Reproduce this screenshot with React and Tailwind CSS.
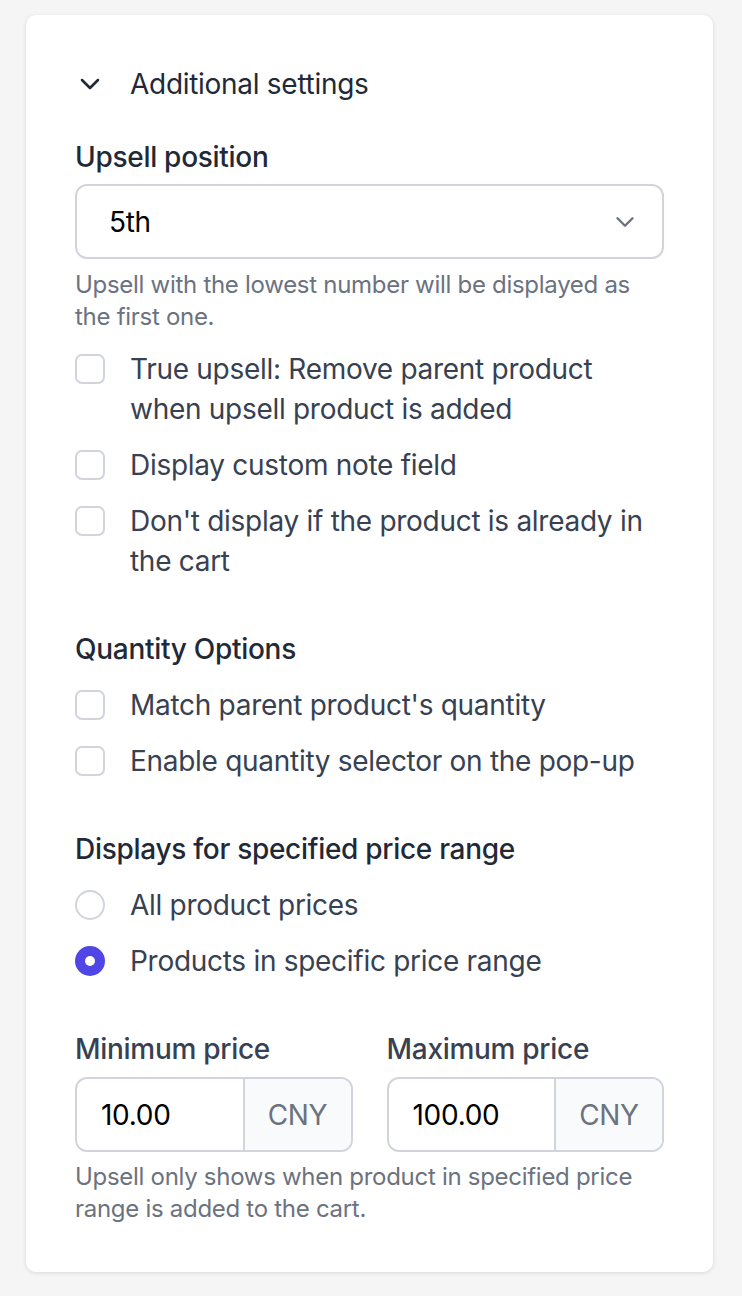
import React from 'react';

function Chevron({ className }) {
  return (
    <svg viewBox="0 0 20 20" fill="none" stroke="currentColor" strokeWidth="1.6" strokeLinecap="round" strokeLinejoin="round" className={className}>
      <path d="M5 7.5l5 5 5-5" />
    </svg>
  );
}

function Checkbox({ children }) {
  return (
    <label className="flex items-start">
      <span className="mt-[5px] w-[30px] h-[30px] shrink-0 rounded-[7px] border-2 border-[#d1d5db] bg-white" />
      <span className="ml-[25px] text-[28px] leading-[40px] text-[#374151]">{children}</span>
    </label>
  );
}

function Radio({ checked, children }) {
  return (
    <label className="flex items-start">
      {checked ? (
        <span className="mt-[5px] w-[30px] h-[30px] shrink-0 rounded-full bg-[#4f46e5] flex items-center justify-center">
          <span className="w-[10px] h-[10px] rounded-full bg-white" />
        </span>
      ) : (
        <span className="mt-[5px] w-[30px] h-[30px] shrink-0 rounded-full border-2 border-[#d1d5db] bg-white" />
      )}
      <span className="ml-[25px] text-[28px] leading-[40px] text-[#374151]">{children}</span>
    </label>
  );
}

function PriceInput({ label, value }) {
  return (
    <div>
      <div className="text-[28px] leading-[40px] font-medium text-[#374151]">{label}</div>
      <div className="mt-[8px] h-[75px] flex rounded-[12px] border-2 border-[#d1d5db] overflow-hidden">
        <div className="flex-1 flex items-center pl-[24px] text-[28px] text-black">{value}</div>
        <div className="w-[108px] flex items-center justify-center border-l-2 border-[#d1d5db] bg-[#f9fafb] text-[28px] text-[#6b7280]">CNY</div>
      </div>
    </div>
  );
}

export default function App() {
  return (
    <div className="min-h-screen bg-[#f5f5f5] pt-[15px] pl-[26px] pr-[29px] pb-[25px]" style={{ fontFamily: 'Inter, "Noto Sans", sans-serif' }}>
      <div className="bg-white rounded-[10px] shadow-[0_1px_4px_rgba(0,0,0,0.12)] px-[49px] pt-[49px] pb-[47px] tracking-[-0.018em]">
        {/* Header */}
        <div className="flex items-center h-[40px] text-[#1f2937]">
          <Chevron className="w-[32px] h-[32px] -ml-[1px]" />
          <span className="ml-[24px] text-[28px]">Additional settings</span>
        </div>

        {/* Upsell position */}
        <div className="mt-[33px] text-[28px] leading-[40px] font-medium text-[#1f2937]">Upsell position</div>
        <div className="mt-[7px] h-[75px] flex items-center justify-between rounded-[12px] border-2 border-[#d1d5db] pl-[32px] pr-[22px]">
          <span className="text-[28px] text-black">5th</span>
          <Chevron className="w-[30px] h-[30px] text-[#6b7280]" />
        </div>
        <p className="mt-[10px] text-[24px] leading-[32px] text-[#6b7280]">
          Upsell with the lowest number will be displayed as the first one.
        </p>

        <div className="mt-[16px] flex flex-col gap-[16px]">
          <Checkbox>True upsell: Remove parent product when upsell product is added</Checkbox>
          <Checkbox>Display custom note field</Checkbox>
          <Checkbox>Don't display if the product is already in the cart</Checkbox>
        </div>

        {/* Quantity */}
        <div className="mt-[48px] text-[28px] leading-[40px] font-medium text-[#1f2937]">Quantity Options</div>
        <div className="mt-[16px] flex flex-col gap-[16px]">
          <Checkbox>Match parent product's quantity</Checkbox>
          <Checkbox>Enable quantity selector on the pop-up</Checkbox>
        </div>

        {/* Price range */}
        <div className="mt-[48px] text-[28px] leading-[40px] font-medium text-[#1f2937]">Displays for specified price range</div>
        <div className="mt-[16px] flex flex-col gap-[16px]">
          <Radio>All product prices</Radio>
          <Radio checked>Products in specific price range</Radio>
        </div>

        <div className="mt-[48px] grid grid-cols-2 gap-[34px]">
          <PriceInput label="Minimum price" value="10.00" />
          <PriceInput label="Maximum price" value="100.00" />
        </div>
        <p className="mt-[9px] text-[24px] leading-[32px] text-[#6b7280]">
          Upsell only shows when product in specified price range is added to the cart.
        </p>
      </div>
    </div>
  );
}
